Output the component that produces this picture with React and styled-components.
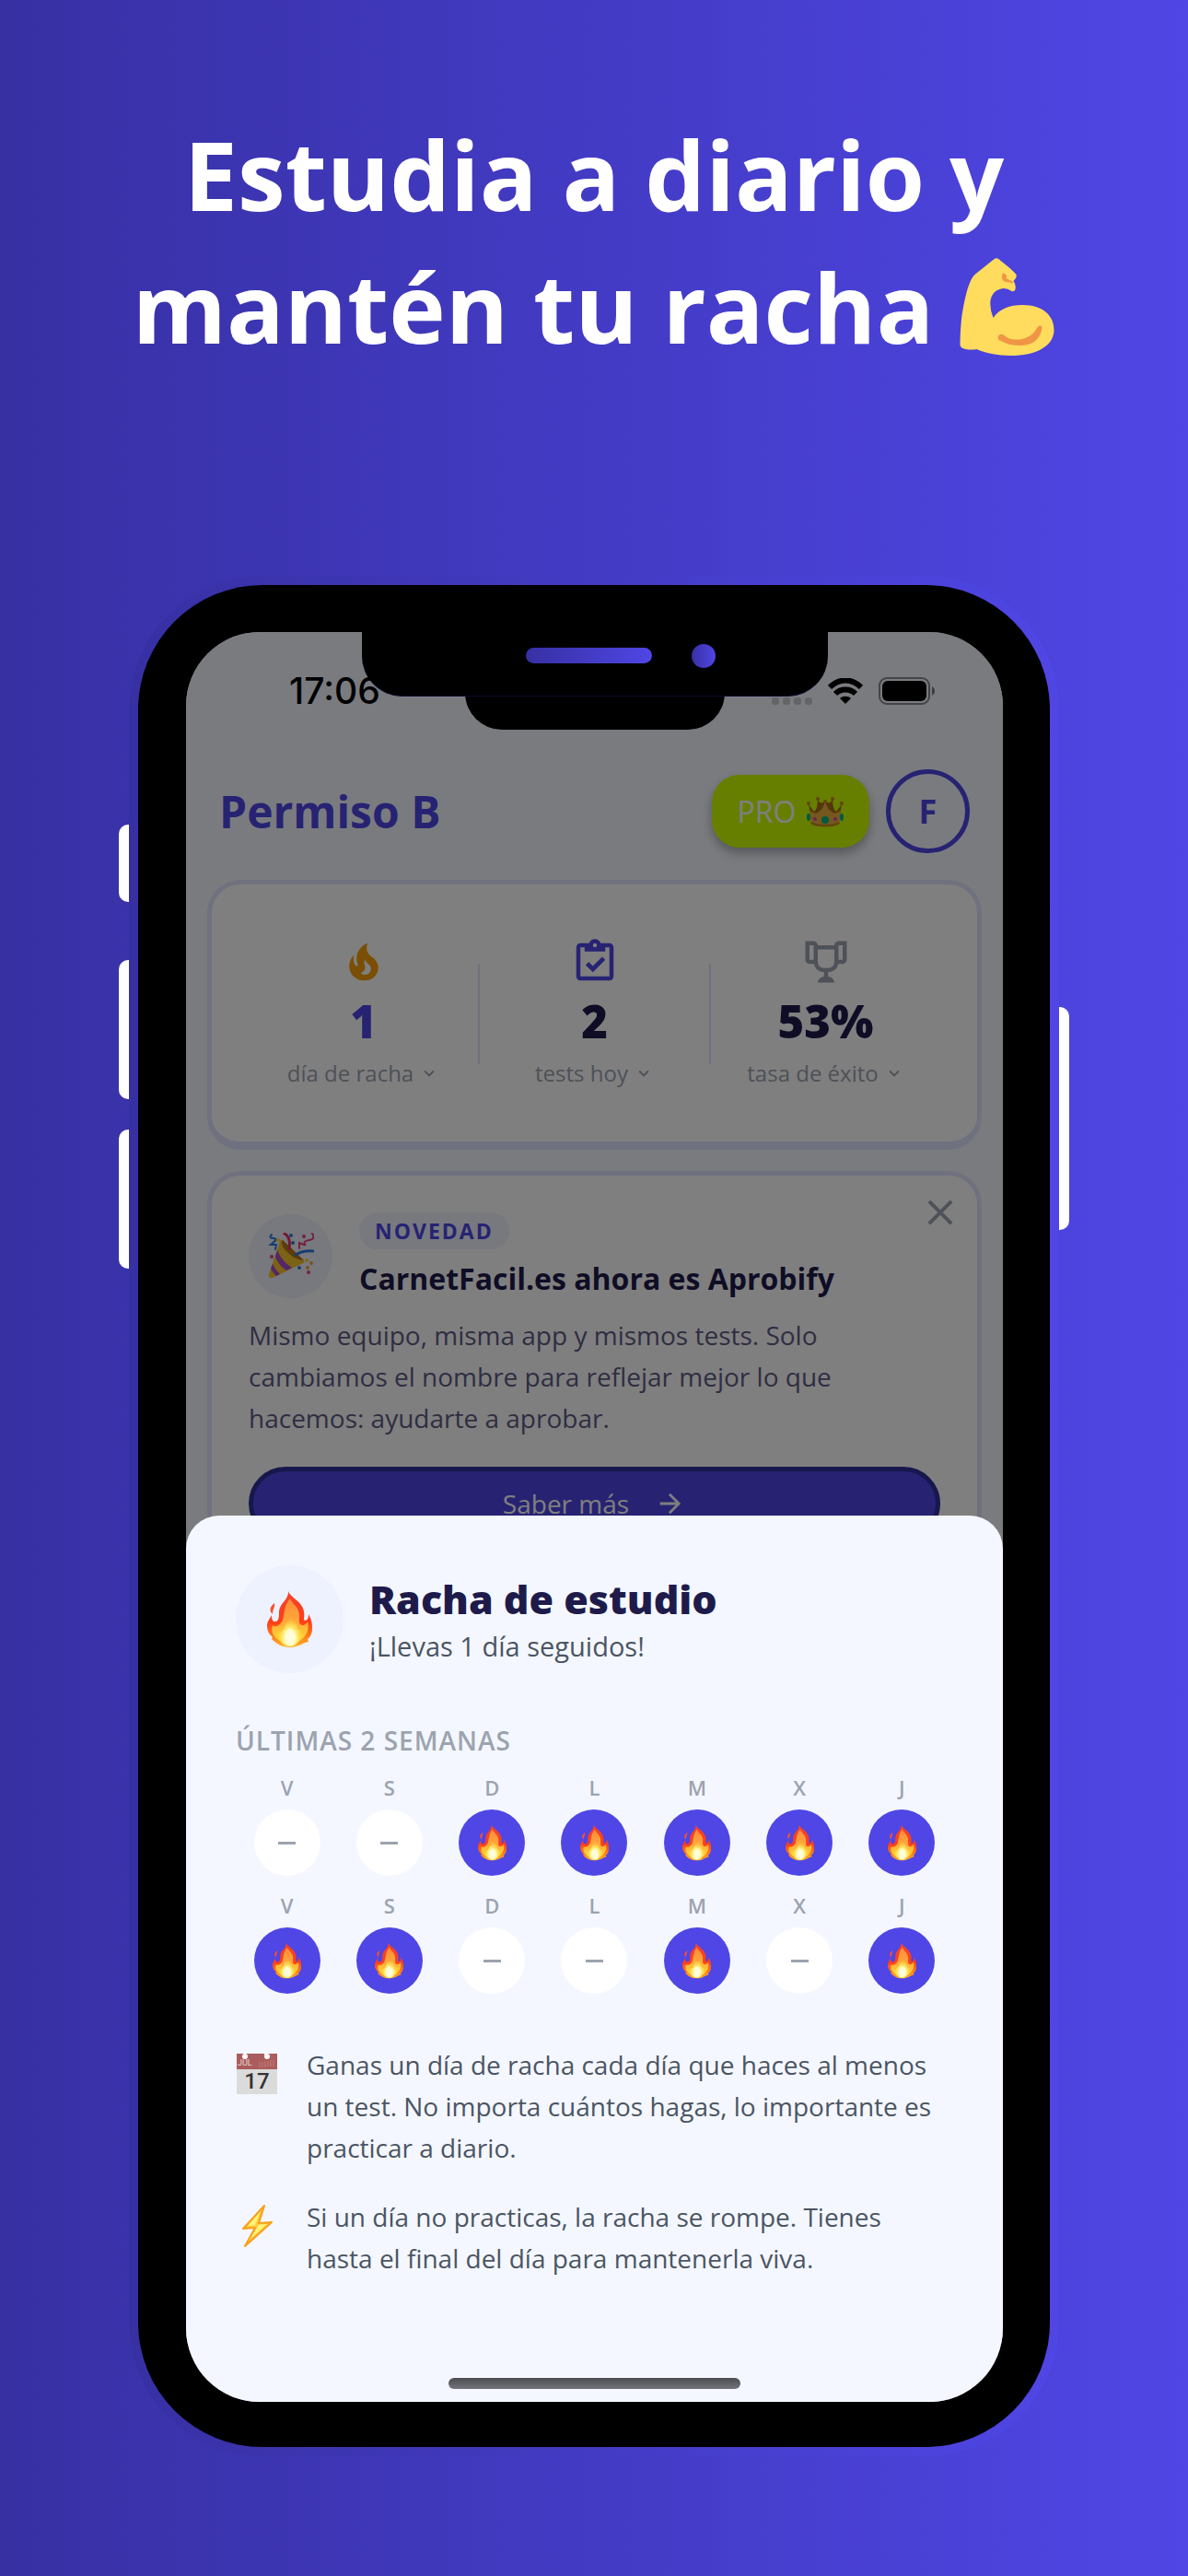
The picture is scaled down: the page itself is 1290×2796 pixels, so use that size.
import React from 'react';
import styled, { createGlobalStyle } from 'styled-components';

const colors = {
  indigo: '#4f46e5',
  indigoDark: '#3730a3',
  navy: '#1e1b4b',
  surface: '#f4f7ff',
  border: '#e0e3ff',
  grey: '#9ca3af',
  text: '#4b5563'
};

const brandGradient = `linear-gradient(90deg, ${colors.indigoDark}, ${colors.indigo})`;

const GlobalStyle = createGlobalStyle`
  * {
    box-sizing: border-box;
  }
  body {
    margin: 0;
    font-family: 'Open Sans', 'Noto Sans', sans-serif;
    color: ${colors.navy};
  }
  h1, h2, h3, p, ul {
    margin: 0;
    padding: 0;
  }
  ul {
    list-style: none;
  }
  button {
    border: 0;
    padding: 0;
    background: none;
    font-family: inherit;
    color: inherit;
    cursor: pointer;
  }
  svg {
    display: block;
    flex: none;
  }
`;

/* ---------- icons ---------- */

const iconPaths = {
  fire:
    'M17.66 11.2C17.43 10.9 17.15 10.64 16.89 10.38C16.22 9.78 15.46 9.35 14.82 8.72C13.33 7.26 13 4.85 13.95 3C13 3.23 12.17 3.75 11.46 4.32C8.87 6.4 7.85 10.07 9.07 13.22C9.11 13.32 9.15 13.42 9.15 13.55C9.15 13.77 9 13.97 8.8 14.05C8.57 14.15 8.33 14.09 8.14 13.93C8.08 13.88 8.04 13.83 8 13.76C6.87 12.33 6.69 10.28 7.45 8.64C5.78 10 4.87 12.3 5 14.47C5.06 14.97 5.12 15.47 5.29 15.97C5.43 16.57 5.7 17.17 6 17.7C7.08 19.43 8.95 20.67 10.96 20.92C13.1 21.19 15.39 20.8 17.03 19.32C18.86 17.66 19.5 15 18.56 12.72L18.43 12.46C18.22 12 17.66 11.2 17.66 11.2M14.5 17.5C14.22 17.74 13.76 18 13.4 18.1C12.28 18.5 11.16 17.94 10.5 17.28C11.69 17 12.4 16.12 12.61 15.23C12.78 14.43 12.46 13.77 12.33 13C12.21 12.26 12.23 11.63 12.5 10.94C12.69 11.32 12.89 11.7 13.13 12C13.9 13 15.11 13.44 15.37 14.8C15.41 14.94 15.43 15.08 15.43 15.23C15.46 16.05 15.1 16.95 14.5 17.5Z',
  clipboard:
    'M19 3H14.82C14.4 1.84 13.3 1 12 1S9.6 1.84 9.18 3H5C3.9 3 3 3.9 3 5V19C3 20.1 3.9 21 5 21H19C20.1 21 21 20.1 21 19V5C21 3.9 20.1 3 19 3M12 3C12.55 3 13 3.45 13 4S12.55 5 12 5 11 4.55 11 4 11.45 3 12 3M7 7H17V5H19V19H5V5H7V7M7.5 13.5L9 12L11 14L15.5 9.5L17 11L11 17L7.5 13.5Z',
  trophy:
    'M18 2C17.1 2 16 3 16 4H8C8 3 6.9 2 6 2H2V11C2 12 3 13 4 13H6.2C6.6 15 7.9 16.7 11 17V19.08C8 19.54 8 22 8 22H16C16 22 16 19.54 13 19.08V17C16.1 16.7 17.4 15 17.8 13H20C21 13 22 12 22 11V2H18M6 11H4V4H6V11M16 11.5C16 13.93 15 15 12 15C9 15 8 13.93 8 11.5V6H16V11.5M20 11H18V4H20V11Z',
  chevron: 'M7.41 8.58L12 13.17L16.59 8.58L18 10L12 16L6 10L7.41 8.58Z',
  close:
    'M19 6.41L17.59 5L12 10.59L6.41 5L5 6.41L10.59 12L5 17.59L6.41 19L12 13.41L17.59 19L19 17.59L13.41 12L19 6.41Z',
  arrow:
    'M4 11V13H16L10.5 18.5L11.92 19.92L19.84 12L11.92 4.08L10.5 5.5L16 11H4Z'
};

const Icon = ({ name, size, color }) => (
  <svg width={size} height={size} viewBox="0 0 24 24" fill={color || 'currentColor'} aria-hidden="true">
    <path d={iconPaths[name]} />
  </svg>
);

const WifiIcon = () => (
  <svg width="38" height="28" viewBox="0 0 38 28" aria-hidden="true">
    <g fill="none" stroke="#000" strokeWidth="6">
      <path d="M2 10C12 0 26 0 36 10" />
      <path d="M8 17C14 11 24 11 30 17" />
    </g>
    <path d="M19 28L13 22C16 19 22 19 25 22Z" />
  </svg>
);

const BatteryIcon = () => (
  <svg width="61" height="30" viewBox="0 0 61 30" aria-hidden="true">
    <rect x="1" y="1" width="54" height="28" rx="8" fill="none" stroke="#000" strokeOpacity="0.45" strokeWidth="2" />
    <rect x="4" y="4" width="48" height="22" rx="6" />
    <path d="M58 10C62 12 62 18 58 20Z" opacity="0.5" />
  </svg>
);

/* ---------- emoji drawings ---------- */

const HiddenSvg = styled.svg`
  position: absolute;
`;

const FlameDefs = () => (
  <HiddenSvg width="0" height="0" aria-hidden="true">
    <defs>
      <linearGradient id="flameOuter" x1="0" y1="0" x2="0" y2="1">
        <stop offset="0" stopColor="#f0452c" />
        <stop offset="0.55" stopColor="#ff3d18" />
        <stop offset="0.8" stopColor="#ff7a1a" />
        <stop offset="1" stopColor="#ffb52b" />
      </linearGradient>
      <linearGradient id="flameInner" x1="0" y1="0" x2="0" y2="1">
        <stop offset="0" stopColor="#ff8a3c" />
        <stop offset="0.5" stopColor="#ffa63a" />
        <stop offset="1" stopColor="#ffe02e" />
      </linearGradient>
      <radialGradient id="flameCore" cx="0.5" cy="0.75" r="0.6">
        <stop offset="0" stopColor="#fffef0" />
        <stop offset="0.45" stopColor="#fff58a" />
        <stop offset="1" stopColor="#ffd02e" stopOpacity="0" />
      </radialGradient>
    </defs>
  </HiddenSvg>
);

const Flame = ({ height }) => (
  <svg height={height} viewBox="0 0 49 63" role="img" aria-label="fuego">
    <path
      d="M23 0C23 7 38 11 40 23C41 28 39 32 41 33C44 33 45 30 45 26C48 31 49 36 49 41C49 47 47 51 44 53L45 56C39 57 34 62 25 62C16 62 10 58 5 53L6 51C2 48 0 44 0 39C0 34 3 31 5 27C5 31 6 35 9 34C13 34 13 28 13 23C14 13 24 11 23 0Z"
      fill="url(#flameOuter)"
    />
    <path d="M8 14C9 19 6 20 6 26C2 22 3 18 8 14Z" fill="#f8502e" />
    <path
      d="M25 9C27 15 35 18 35 27C35 33 34 37 38 38C42 38 43 36 44 34C46 41 44 48 38 53C32 59 18 59 11 53C6 49 4 44 6 38C9 41 15 38 17 32C19 24 19 15 25 9Z"
      fill="url(#flameInner)"
    />
    <path
      d="M27 24C26 31 33 34 33 40C33 43 36 44 38 43C38 52 33 61 25 61C17 61 11 54 12 46C18 46 20 37 22 33C23 30 25 27 27 24Z"
      fill="url(#flameCore)"
    />
    <ellipse cx="25" cy="51" rx="6" ry="9" fill="#fffde0" opacity="0.8" />
  </svg>
);

const Biceps = () => (
  <svg width="104" height="107" viewBox="0 0 103 107" role="img" aria-label="fuerza">
    <path
      d="M36 2Q40-2 44 3Q56 12 61 18C62 20 60 23 58 25Q61 29 60 34Q59 37 56 36Q49 31 43 34Q35 36 33 46Q32 55 36 65C43 55 54 51 68 51C89 51 102 62 102 78C102 96 82 106 55 106C40 106 27 103 18 99Q12 100 6 99Q0 98 0 94C0 82 1 71 2 62Q8 25 16 18Z"
      fill="#ffdc5d"
    />
    <path
      d="M41 86C42 82 46 82 48 84C55 91 75 91 83 77C85 72 90 73 89 77C86 91 75 96 63 95C54 95 46 91 42 89Z"
      fill="#ef9645"
    />
    <path d="M46 17C45 21 45 25 50 26Q55 26 57 28Q58 26 56 25Q52 23 50 22Q52 19 48 17Q47 16 46 17Z" fill="#ef9645" />
  </svg>
);

const Crown = () => (
  <svg width="40" height="34" viewBox="0 0 40 34" aria-hidden="true">
    <path d="M5 27L2 9L8 17Q12 14 12 3Q15 11 20 5Q25 11 28 3Q28 14 32 17L38 9L35 27Z" fill="#a86a18" />
    <path d="M5 29L3 15Q9 21 13 17Q18 14 20 5Q22 14 27 17Q31 21 37 15L35 29Q20 36 5 29Z" fill="#e8b03a" />
    <path d="M4 28Q20 34 36 28L35 31Q20 36 5 31Z" fill="#c98a20" />
    <g fill="#c98424">
      <circle cx="2" cy="8" r="2" />
      <circle cx="12" cy="3" r="2" />
      <circle cx="20" cy="6" r="2" />
      <circle cx="28" cy="3" r="2" />
      <circle cx="38" cy="8" r="2" />
    </g>
    <ellipse cx="20" cy="26" rx="4" ry="4" fill="#00b583" />
    <ellipse cx="2" cy="23" rx="2" ry="4" fill="#00b583" />
    <ellipse cx="38" cy="23" rx="2" ry="4" fill="#00b583" />
    <circle cx="9" cy="25" r="2" fill="#e838b8" />
    <circle cx="31" cy="25" r="2" fill="#e838b8" />
  </svg>
);

const PartyPopper = () => (
  <svg width="50" height="50" viewBox="0 0 50 50" role="img" aria-label="celebración">
    <path d="M16 8L39 30Q40 33 36 34L5 49Q0 50 1 45L13 9Q14 7 16 8Z" fill="#f7c52b" />
    <path d="M16 8L39 30Q28 30 18 18Q13 11 16 8Z" fill="#b9791a" />
    <path d="M10 19Q15 31 26 38L20 41Q11 35 8 26Z" fill="#a94fd0" />
    <path d="M5 34Q8 40 13 45L9 47Q5 43 3 39Z" fill="#a94fd0" />
    <g fill="none" strokeWidth="2" strokeLinecap="round">
      <path d="M18 1Q25 5 23 17" stroke="#e63158" strokeWidth="3" />
      <path d="M48 1Q52 7 45 8T40 12T34 11V17" stroke="#e6447a" />
      <path d="M4 2Q0 6 6 6T3 13H9L8 18" stroke="#2f7be0" />
      <path d="M30 24Q38 19 49 20" stroke="#2f7be0" strokeWidth="3" />
    </g>
    <g fill="#2f7be0">
      <circle cx="25" cy="3" r="2" />
      <circle cx="27" cy="11" r="2" />
      <circle cx="34" cy="38" r="2" />
    </g>
    <g fill="#e6447a">
      <circle cx="4" cy="26" r="2" />
      <circle cx="39" cy="4" r="2" />
      <circle cx="44" cy="43" r="2" />
    </g>
    <g fill="#f2a53a">
      <circle cx="43" cy="38" r="2" />
      <circle cx="47" cy="33" r="2" />
      <circle cx="42" cy="30" r="2" fill="#f7d32b" />
      <circle cx="11" cy="8" r="2" fill="#f7d32b" />
    </g>
  </svg>
);

const CalendarEmoji = () => (
  <svg width="46" height="46" viewBox="0 0 46 46" role="img" aria-label="calendario">
    <rect x="1" y="1" width="44" height="44" fill="#dbdbdb" />
    <rect x="1" y="1" width="44" height="17" fill="#ab5c5c" />
    <circle cx="10" cy="4" r="3" fill="#fff" />
    <circle cx="34" cy="4" r="3" fill="#fff" />
    <path d="M10 4V0M34 4L31 0" stroke="#fff" strokeWidth="2" />
    <path d="M26 10V16M29 10V16M32 9V16M35 9V15M38 8V15M41 8V15" stroke="#c47f7f" strokeWidth="1" />
    <text x="2" y="14" fontSize="9" fill="#e8d5d5" fontFamily="Roboto, sans-serif">JUL</text>
    <text x="23" y="39" fontSize="24" fontWeight="500" textAnchor="middle" fill="#333" fontFamily="Roboto, sans-serif">17</text>
  </svg>
);

const BoltEmoji = () => (
  <svg width="46" height="46" viewBox="0 0 46 46" role="img" aria-label="rayo">
    <path d="M31 1L8 26L21 25L10 45L39 19L25 20Z" fill="#ffc83a" stroke="#f9a01b" strokeWidth="2" strokeLinejoin="round" />
    <path d="M27 7L13 23L25 22L15 38L34 21L21 22Z" fill="#fff47a" />
  </svg>
);

/* ---------- poster ---------- */

const Poster = styled.main`
  display: flex;
  flex-direction: column;
  min-height: 100vh;
  padding: 117px 129px 130px;
  background: ${brandGradient};
`;

const Headline = styled.h1`
  min-height: 508px;
  font-size: 104px;
  font-weight: 700;
  line-height: 144px;
  text-align: center;
  white-space: nowrap;
  color: #fff;
`;

const HeadlineRow = styled.span`
  display: flex;
  align-items: center;
  justify-content: center;
  gap: 28px;
`;

const Phone = styled.div`
  display: flex;
  flex: 1;
`;

const Rail = styled.div`
  display: flex;
  flex-direction: column;
  flex: none;
  width: 11px;
  gap: 33px;
  padding-top: ${props => (props.$side === 'left' ? 270 : 468)}px;
`;

const SideKey = styled.span`
  height: ${props => props.$height}px;
  margin-bottom: ${props => (props.$spaced ? 30 : 0)}px;
  border-radius: ${props => (props.$side === 'left' ? '10px 0 0 10px' : '0 10px 10px 0')};
  background: #fff;
`;

const Ring = styled.div`
  display: flex;
  flex: 1;
  min-width: 0;
  padding: 10px;
  border-radius: 145px;
  background: ${brandGradient};
`;

const Bezel = styled.div`
  display: flex;
  flex: 1;
  min-width: 0;
  padding: 51px 51px 49px 52px;
  border-radius: 135px;
  background: #000;
`;

const Screen = styled.div`
  position: relative;
  display: grid;
  flex: 1;
  min-width: 0;
  overflow: hidden;
  border-radius: 80px;
  background: ${colors.surface};
`;

const Notch = styled.div`
  position: absolute;
  top: 0;
  left: 50%;
  display: flex;
  align-items: center;
  justify-content: flex-end;
  gap: 43px;
  width: 506px;
  height: 70px;
  margin-left: -253px;
  padding: 0 122px 18px 0;
  border-bottom: 1px solid #0c0a30;
  border-radius: 0 0 44px 44px;
  background: #000;
`;

const Speaker = styled.span`
  width: 137px;
  height: 17px;
  border-radius: 9px;
  background: ${brandGradient};
`;

const Camera = styled.span`
  width: 26px;
  height: 26px;
  border-radius: 50%;
  background: ${brandGradient};
`;

/* ---------- home screen ---------- */

const Home = styled.div`
  grid-area: 1 / 1;
  min-width: 0;
  min-height: 0;
  overflow: hidden;
`;

const StatusBar = styled.div`
  display: flex;
  align-items: center;
  justify-content: space-between;
  height: 128px;
  padding: 0 74px 0 112px;
`;

const Clock = styled.time`
  font-family: Inter, sans-serif;
  font-size: 39px;
  font-weight: 500;
  line-height: 44px;
  color: #000;
`;

const Island = styled.div`
  position: absolute;
  top: 0;
  left: 50%;
  width: 282px;
  height: 106px;
  margin-left: -141px;
  border-radius: 0 0 40px 40px;
  background: #000;
`;

const StatusIcons = styled.div`
  display: flex;
  align-items: center;
  gap: 17px;
`;

const Signal = styled.span`
  display: flex;
  align-self: flex-end;
  gap: 4px;

  i {
    width: 8px;
    height: 8px;
    border-radius: 3px;
    background: #c8c9cf;
  }
`;

const Header = styled.header`
  display: flex;
  align-items: center;
  gap: 18px;
  padding: 21px 36px 29px;
`;

const Title = styled.h2`
  flex: 1;
  font-size: 48px;
  font-weight: 700;
  line-height: 62px;
  color: ${colors.indigo};
`;

const ProButton = styled.button`
  display: flex;
  align-items: center;
  justify-content: center;
  gap: 12px;
  width: 171px;
  height: 79px;
  border-radius: 30px;
  background: #cf0;
  box-shadow: 0 6px 12px rgba(0, 0, 0, 0.3);
  font-size: 32px;
  font-weight: 400;
  color: #fff;
`;

const Avatar = styled.button`
  width: 91px;
  height: 91px;
  border: 5px solid ${colors.indigo};
  border-radius: 50%;
  font-size: 36px;
  font-weight: 700;
  color: ${colors.indigo};
`;

const Card = styled.section`
  position: relative;
  margin: 0 23px 23px;
  border: 5px solid ${colors.border};
  border-bottom-width: 9px;
  border-radius: 36px;
  background: #fff;
`;

const Stats = styled(Card)`
  display: grid;
  grid-template-columns: repeat(3, 1fr);
  align-items: center;
  padding: 57px 39px 56px;
`;

const Stat = styled.button`
  position: relative;
  display: flex;
  flex-direction: column;
  align-items: center;

  & + &::before {
    content: '';
    position: absolute;
    top: 29px;
    left: -1px;
    width: 2px;
    height: 109px;
    background: ${colors.border};
  }
`;

const StatValue = styled.strong`
  margin: 8px 0 11px;
  font-size: 49px;
  font-weight: 800;
  line-height: 58px;
  color: ${props => (props.$active ? colors.indigo : colors.navy)};
`;

const StatLabel = styled.span`
  display: flex;
  align-items: center;
  gap: 6px;
  padding-bottom: 1px;
  font-size: 24px;
  line-height: 34px;
  white-space: nowrap;
  color: ${colors.grey};
`;

const News = styled(Card)`
  padding: 40px;
`;

const CloseButton = styled.button`
  position: absolute;
  top: 17px;
  right: 17px;
  color: ${colors.grey};
`;

const NewsHead = styled.div`
  display: flex;
  align-items: center;
  gap: 29px;
`;

const Bubble = styled.div`
  display: flex;
  align-items: center;
  justify-content: center;
  flex: none;
  width: ${props => props.$size}px;
  height: ${props => props.$size}px;
  border-radius: 50%;
  background: #eef2ff;
`;

const Badge = styled.span`
  display: inline-block;
  padding: 0 17px;
  border-radius: 20px;
  background: #eef2ff;
  font-size: 23px;
  font-weight: 700;
  line-height: 40px;
  letter-spacing: 2px;
  color: ${colors.indigo};
`;

const NewsTitle = styled.h3`
  margin-top: 10px;
  font-size: 32px;
  font-weight: 700;
  line-height: 44px;
  white-space: nowrap;
`;

const NewsText = styled.p`
  margin: 17px 0 30px;
  font-size: 28px;
  line-height: 45px;
  color: #5f5c85;
`;

const PrimaryButton = styled.button`
  display: flex;
  align-items: center;
  justify-content: center;
  gap: 28px;
  width: 100%;
  height: 80px;
  border: 5px solid #312e9a;
  border-radius: 40px;
  background: ${colors.indigo};
  font-size: 28px;
  color: #fff;
`;

/* ---------- streak sheet ---------- */

const Backdrop = styled.div`
  position: relative;
  grid-area: 1 / 1;
  display: flex;
  align-items: flex-end;
  background: rgba(0, 0, 0, 0.5);
`;

const Sheet = styled.section`
  display: flex;
  flex-direction: column;
  width: 100%;
  padding: 54px 54px 14px;
  border-radius: 36px 36px 0 0;
  background: ${colors.surface};
`;

const SheetHead = styled.header`
  display: flex;
  align-items: center;
  gap: 28px;
`;

const SheetTitle = styled.h2`
  font-size: 43px;
  font-weight: 800;
  line-height: 56px;
`;

const SheetSubtitle = styled.p`
  margin-top: 2px;
  font-size: 29px;
  line-height: 42px;
  color: ${colors.text};
`;

const SectionLabel = styled.h3`
  margin: 54px 0 16px;
  font-size: 28px;
  font-weight: 600;
  line-height: 38px;
  letter-spacing: 1px;
  color: ${colors.grey};
`;

const DayGrid = styled.ul`
  display: grid;
  grid-template-columns: repeat(7, 1fr);
  row-gap: 16px;
`;

const Day = styled.li`
  display: flex;
  flex-direction: column;
  align-items: center;
  gap: 8px;
  font-size: 22px;
  font-weight: 600;
  line-height: 32px;
  color: ${colors.grey};
`;

const DayMark = styled.span`
  display: flex;
  align-items: center;
  justify-content: center;
  width: 72px;
  height: 72px;
  border-radius: 50%;
  background: ${props => (props.$done ? colors.indigo : '#fff')};
`;

const Dash = styled.span`
  width: 19px;
  height: 3px;
  background: ${colors.grey};
`;

const Notes = styled.ul`
  display: grid;
  gap: 30px;
  margin-top: 55px;
`;

const Note = styled.li`
  display: flex;
  gap: 31px;
  font-size: 28px;
  line-height: 45px;
  white-space: nowrap;
  color: ${colors.text};

  svg {
    margin-top: 9px;
  }
`;

const HomeIndicator = styled.div`
  align-self: center;
  width: 317px;
  height: 12px;
  margin-top: 107px;
  border-radius: 6px;
  background: linear-gradient(#4c4d51, #737479);
`;

const stats = [
  { icon: 'fire', color: '#f59e0b', value: '1', label: 'día de racha', active: true },
  { icon: 'clipboard', color: colors.indigo, value: '2', label: 'tests hoy' },
  { icon: 'trophy', color: colors.grey, value: '53%', label: 'tasa de éxito' }
];

const days = [
  ['V', false],
  ['S', false],
  ['D', true],
  ['L', true],
  ['M', true],
  ['X', true],
  ['J', true],
  ['V', true],
  ['S', true],
  ['D', false],
  ['L', false],
  ['M', true],
  ['X', false],
  ['J', true]
];

const HomeScreen = () => (
  <Home>
    <StatusBar>
      <Clock>17:06</Clock>
      <Island />
      <StatusIcons>
        <Signal>
          <i />
          <i />
          <i />
          <i />
        </Signal>
        <WifiIcon />
        <BatteryIcon />
      </StatusIcons>
    </StatusBar>
    <Header>
      <Title>Permiso B</Title>
      <ProButton>
        PRO <Crown />
      </ProButton>
      <Avatar>F</Avatar>
    </Header>
    <Stats>
      {stats.map(stat => (
        <Stat key={stat.label}>
          <Icon name={stat.icon} size={54} color={stat.color} />
          <StatValue $active={stat.active}>{stat.value}</StatValue>
          <StatLabel>
            {stat.label}
            <Icon name="chevron" size={22} />
          </StatLabel>
        </Stat>
      ))}
    </Stats>
    <News>
      <CloseButton aria-label="Cerrar">
        <Icon name="close" size={46} />
      </CloseButton>
      <NewsHead>
        <Bubble $size={91}>
          <PartyPopper />
        </Bubble>
        <div>
          <Badge>NOVEDAD</Badge>
          <NewsTitle>CarnetFacil.es ahora es Aprobify</NewsTitle>
        </div>
      </NewsHead>
      <NewsText>
        Mismo equipo, misma app y mismos tests. Solo
        <br />
        cambiamos el nombre para reflejar mejor lo que
        <br />
        hacemos: ayudarte a aprobar.
      </NewsText>
      <PrimaryButton>
        Saber más <Icon name="arrow" size={34} />
      </PrimaryButton>
    </News>
  </Home>
);

const StreakSheet = () => (
  <Sheet role="dialog" aria-labelledby="streak-title">
    <SheetHead>
      <Bubble $size={117}>
        <Flame height={63} />
      </Bubble>
      <div>
        <SheetTitle id="streak-title">Racha de estudio</SheetTitle>
        <SheetSubtitle>¡Llevas 1 día seguidos!</SheetSubtitle>
      </div>
    </SheetHead>
    <SectionLabel>ÚLTIMAS 2 SEMANAS</SectionLabel>
    <DayGrid>
      {days.map(([letter, done], i) => (
        <Day key={i}>
          {letter}
          <DayMark $done={done}>{done ? <Flame height={40} /> : <Dash />}</DayMark>
        </Day>
      ))}
    </DayGrid>
    <Notes>
      <Note>
        <CalendarEmoji />
        <p>
          Ganas un día de racha cada día que haces al menos
          <br />
          un test. No importa cuántos hagas, lo importante es
          <br />
          practicar a diario.
        </p>
      </Note>
      <Note>
        <BoltEmoji />
        <p>
          Si un día no practicas, la racha se rompe. Tienes
          <br />
          hasta el final del día para mantenerla viva.
        </p>
      </Note>
    </Notes>
    <HomeIndicator />
  </Sheet>
);

const App = () => (
  <Poster>
    <GlobalStyle />
    <FlameDefs />
    <Headline>
      Estudia a diario y
      <HeadlineRow>
        mantén tu racha <Biceps />
      </HeadlineRow>
    </Headline>
    <Phone>
      <Rail $side="left">
        <SideKey $side="left" $height={84} $spaced />
        <SideKey $side="left" $height={151} />
        <SideKey $side="left" $height={151} />
      </Rail>
      <Ring>
        <Bezel>
          <Screen>
            <HomeScreen />
            <Backdrop>
              <StreakSheet />
            </Backdrop>
            <Notch>
              <Speaker />
              <Camera />
            </Notch>
          </Screen>
        </Bezel>
      </Ring>
      <Rail $side="right">
        <SideKey $side="right" $height={242} />
      </Rail>
    </Phone>
  </Poster>
);

export default App;
